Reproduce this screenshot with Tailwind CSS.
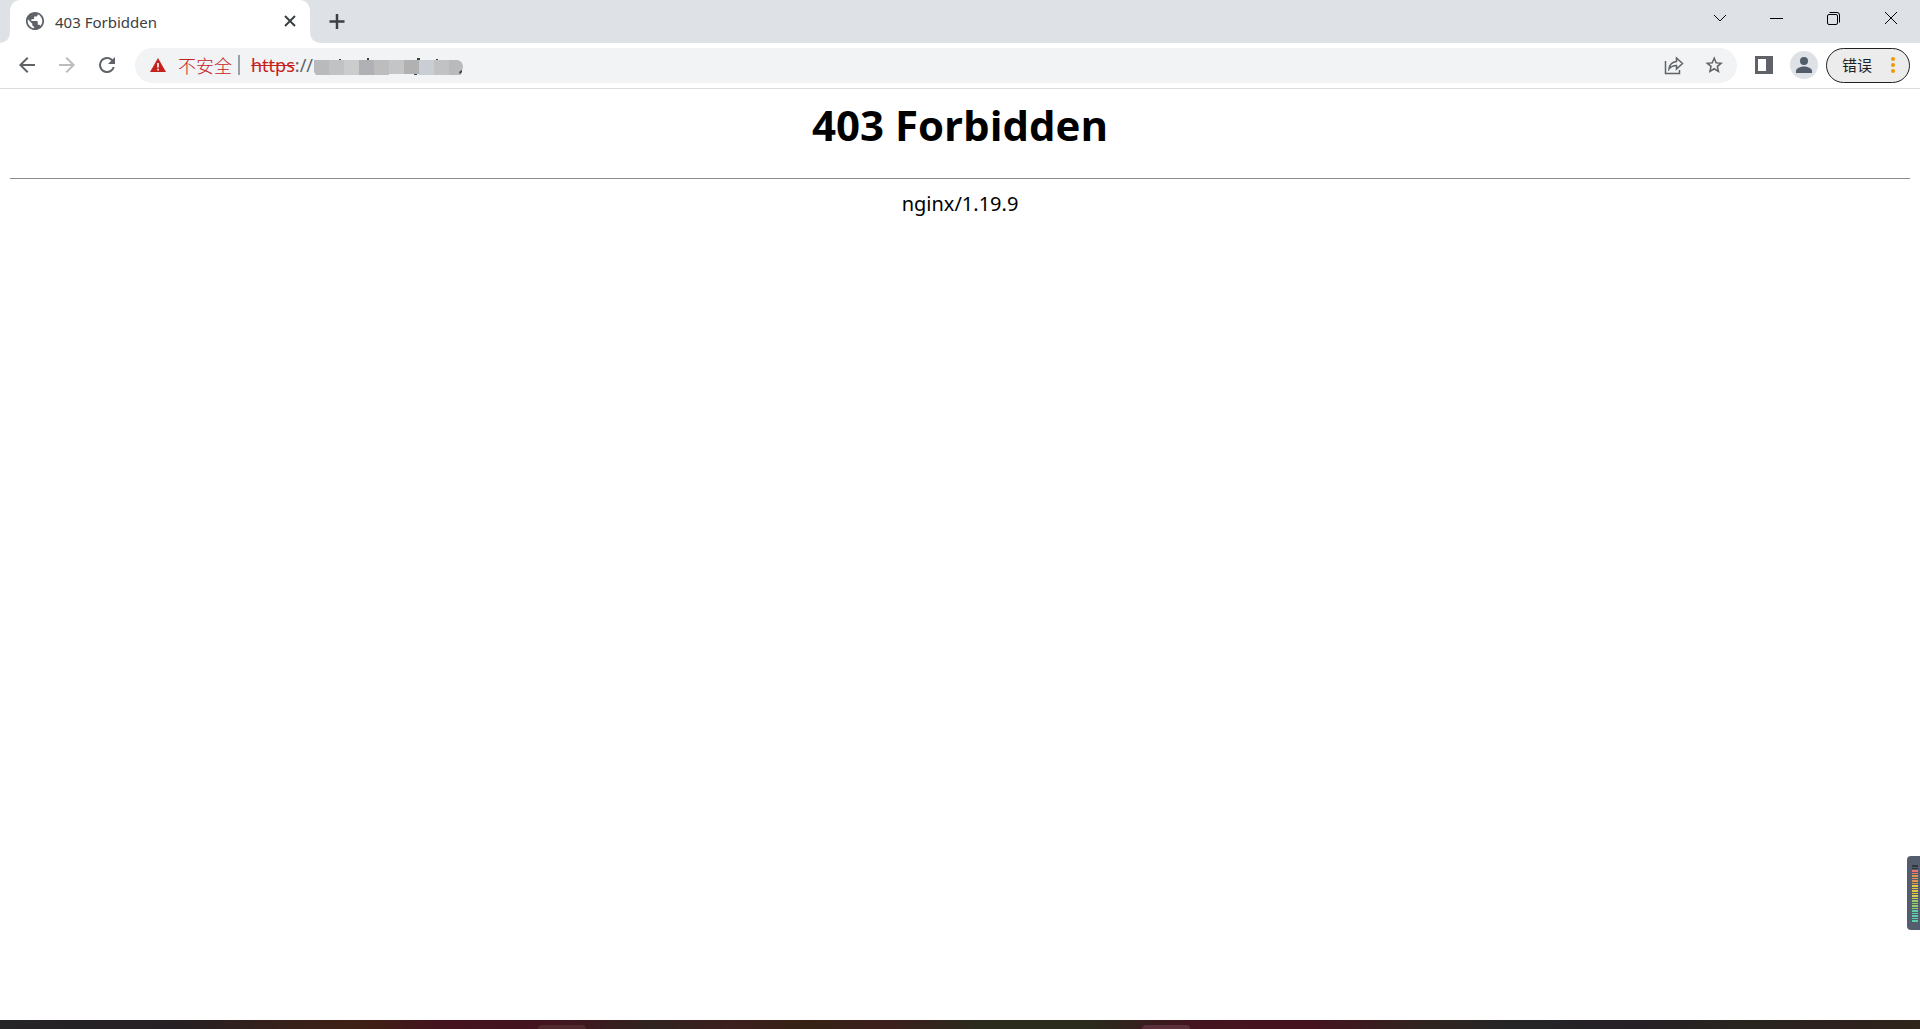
<!DOCTYPE html>
<html lang="zh-CN">
<head>
    <meta charset="UTF-8">
    <meta name="viewport" content="width=device-width, initial-scale=1.0">
    <title>403 Forbidden</title>
    <script src="https://cdn.jsdelivr.net/npm/@tailwindcss/browser@4"></script>
</head>
<body class="h-screen flex flex-col overflow-hidden bg-white font-['Noto_Sans','Noto_Sans_CJK_SC',sans-serif]">
    <!-- Tab strip -->
    <header class="h-[43px] shrink-0 flex items-stretch bg-[#dee1e6] text-[#3c4043]">
        <svg class="w-[10px] h-[43px] shrink-0" viewBox="0 0 10 43" fill="#fff" aria-hidden="true"><path d="M10 33v10H0a10 10 0 0 0 10-10z"/></svg>
        <div class="w-[300px] flex items-center bg-white rounded-t-[10px] pl-[15px] pr-[10px] pb-0.5">
            <svg class="w-5 h-5 shrink-0" viewBox="1 1 22 22" fill="#5f6368" aria-hidden="true"><path d="M12 2C6.480 2 2 6.480 2 12s4.480 10 10 10 10-4.480 10-10S17.520 2 12 2zm-1 17.930c-3.950-.490-7-3.850-7-7.930 0-.620.080-1.210.210-1.790L9 15v1c0 1.100.9 2 2 2v1.930zm6.900-2.540c-.260-.810-1-1.390-1.900-1.390h-1v-3c0-.550-.450-1-1-1H8v-2h2c.550 0 1-.450 1-1V7h2c1.100 0 2-.9 2-2v-.410c2.930 1.190 5 4.060 5 7.410 0 2.080-.8 3.970-2.100 5.390z"/></svg>
            <span class="ml-[10px] mt-0.5 flex-1 text-[15px] leading-5">403 Forbidden</span>
            <button class="w-5 h-5" aria-label="关闭标签页">
                <svg class="w-5 h-5" viewBox="0 0 20 20" stroke="#3c4043" stroke-width="2" aria-hidden="true"><path d="M5 5l10 10M15 5L5 15"/></svg>
            </button>
        </div>
        <svg class="w-[10px] h-[43px] shrink-0" viewBox="0 0 10 43" fill="#fff" aria-hidden="true"><path d="M0 33v10h10A10 10 0 0 1 0 33z"/></svg>
        <button class="w-[34px] pb-0.5 flex items-center justify-center" aria-label="打开新的标签页">
            <svg class="w-5 h-5" viewBox="0 0 20 20" stroke="#3c4043" stroke-width="2.500" aria-hidden="true"><path d="M10 3v15M2.500 10.500h15"/></svg>
        </button>
        <div class="ml-auto h-9 pr-px flex text-black">
            <button class="w-[57px] flex items-center justify-center" aria-label="搜索标签页">
                <svg class="w-4 h-4" viewBox="0 0 16 16" fill="none" stroke="currentColor" aria-hidden="true"><path d="M2 5l6 6 6-6"/></svg>
            </button>
            <button class="w-[57px] flex items-center justify-center" aria-label="最小化">
                <svg class="w-4 h-4" viewBox="0 0 16 16" stroke="currentColor" aria-hidden="true"><path d="M1 8.500h13"/></svg>
            </button>
            <button class="w-[57px] flex items-center justify-center" aria-label="还原">
                <svg class="w-4 h-4" viewBox="0 0 16 16" fill="none" stroke="currentColor" aria-hidden="true"><rect x="1.500" y="4.500" width="10" height="10" rx="1.500"/><path d="M3.500 2.500h7.500q2.500 0 2.500 2.500v7.500"/></svg>
            </button>
            <button class="w-[57px] flex items-center justify-center" aria-label="关闭">
                <svg class="w-4 h-4" viewBox="0 0 16 16" stroke="currentColor" aria-hidden="true"><path d="M2 2l12 12M14 2L2 14"/></svg>
            </button>
        </div>
    </header>

    <!-- Toolbar -->
    <nav class="h-[46px] shrink-0 flex items-center pl-[7px] pr-[10px] pb-px border-b border-[#dadce0] text-[#5f6368]">
        <button class="w-10 flex justify-center" aria-label="后退">
            <svg class="w-6 h-6" viewBox="0 0 24 24" fill="currentColor" aria-hidden="true"><path d="M20 11H7.830l5.590-5.590L12 4l-8 8 8 8 1.410-1.410L7.830 13H20v-2z"/></svg>
        </button>
        <button class="w-10 flex justify-center text-[#babcbe]" aria-label="前进">
            <svg class="w-6 h-6" viewBox="0 0 24 24" fill="currentColor" aria-hidden="true"><path d="M12 4l-1.410 1.410L16.170 11H4v2h12.170l-5.580 5.590L12 20l8-8z"/></svg>
        </button>
        <button class="w-10 flex justify-center" aria-label="重新加载">
            <svg class="w-6 h-6" viewBox="0 0 24 24" fill="currentColor" aria-hidden="true"><path d="M17.650 6.350A7.958 7.958 0 0 0 12 4a8 8 0 1 0 7.730 10h-2.080A6 6 0 1 1 12 6c1.660 0 3.140.690 4.220 1.780L13 11h7V4l-2.350 2.350z"/></svg>
        </button>
        <div class="ml-2 h-[35px] flex-1 flex items-center rounded-full bg-[#f1f3f4] pl-[15px] pr-[11px] text-[18px] leading-6 text-[#5f6368]">
            <button class="flex items-center text-[#c5221f]">
                <svg class="w-4 h-4" viewBox="0 0 16 16" aria-hidden="true"><path d="M8 1l8 14H0z" fill="#c5221f"/><path d="M7.200 6h1.600v4.500H7.200zM7.200 11.800h1.600v1.600H7.200z" fill="#fff"/></svg>
                <span class="ml-3 font-light font-['Noto_Sans_CJK_SC',sans-serif]">不安全</span>
            </button>
            <span class="ml-[6px] mr-[11px] w-0.5 h-5 bg-[#9aa0a6]"></span>
            <span><s class="text-[#c5221f]">https</s>://</span>
            <!-- Redacted host name -->
            <svg class="w-[150px] h-5" viewBox="0 0 150 20" aria-hidden="true">
                <path d="M26 4h2v2h-2zM54 3h2v3h-2zM104 3h3v3h-3zM123 4h2v2h-2zM101 19h3v1h-3zM108 19h2v1h-2z" fill="#3c4043"/>
                <path d="M1 5h15v15H3l-2-3z" fill="#b8babc"/>
                <path d="M16 5h15v15H16z" fill="#c1c2c3"/>
                <path d="M31 5h15v15H31z" fill="#cbcdcc"/>
                <path d="M46 5h15v15H46z" fill="#b0b1b5"/>
                <path d="M61 5h15v15H61z" fill="#bdbdbd"/>
                <path d="M76 5h15v14H76z" fill="#c4c5c7"/>
                <path d="M91 5h15v14H91z" fill="#b1b1b1"/>
                <path d="M106 5h15v15h-15z" fill="#c8ced3"/>
                <path d="M121 5h15v15h-15z" fill="#c1c2c4"/>
                <path d="M136 5h9q5 2 5 7l-2 8h-12z" fill="#b9babb"/>
                <path d="M146 17l3-2v2l-2 2z" fill="#3c4043"/>
            </svg>
            <div class="ml-auto flex gap-4">
                <button aria-label="分享此网页">
                    <svg class="w-6 h-6" viewBox="0 0 24 24" fill="none" stroke="currentColor" stroke-width="1.500" aria-hidden="true"><path d="M3.500 8v12.500h14V17M14.500 5l6 5.500-6 5.500v-3.500c-3.500 0-5.500 1-7.500 3.500.5-4 3-7 7.500-7.500z"/></svg>
                </button>
                <button aria-label="为此标签页添加书签">
                    <svg class="w-6 h-6" viewBox="0 0 24 24" fill="currentColor" aria-hidden="true"><path d="M21 9.700l-6.300-.55L12.200 3.300 9.700 9.150l-6.300.55 4.800 4.150L6.800 20l5.400-3.250L17.600 20l-1.400-6.150zm-8.800 5.100l-3.150 1.900.84-3.580-2.790-2.410 3.670-.32 1.430-3.390 1.430 3.390 3.670.32-2.790 2.410.84 3.580z"/></svg>
                </button>
            </div>
        </div>
        <button class="ml-[17px] w-5 h-5" aria-label="侧边栏">
            <svg class="w-5 h-5" viewBox="0 0 20 20" aria-hidden="true"><path d="M1 1h18v18H1zM4 4v12h8V4z" fill="#5f6368" fill-rule="evenodd"/></svg>
        </button>
        <button class="ml-4 w-7 h-7 flex items-center justify-center rounded-full bg-[#dee1e6]" aria-label="用户">
            <svg class="w-6 h-6" viewBox="0 0 24 24" fill="#525d6b" aria-hidden="true"><circle cx="12" cy="8" r="4"/><path d="M4 20v-2c0-3 5-4.500 8-4.500s8 1.500 8 4.500v2z"/></svg>
        </button>
        <button class="ml-2 h-[35px] w-[84px] flex items-center justify-between rounded-full border border-[#202124] bg-[#ececec] pl-[15px] pr-3 text-[15px] text-[#202124]">
            <span class="font-['Noto_Sans_CJK_SC',sans-serif]">错误</span>
            <svg class="w-2 h-5" viewBox="0 0 8 20" fill="#f29900" aria-hidden="true"><circle cx="4" cy="4" r="2"/><circle cx="4" cy="10" r="2"/><circle cx="4" cy="16" r="2"/></svg>
        </button>
    </nav>

    <!-- Page content -->
    <main class="relative flex-1 px-[10px] text-center text-black">
        <h1 class="pt-2 text-[42px] leading-[56px] font-bold font-['Open_Sans',sans-serif]">403 Forbidden</h1>
        <hr class="mt-[25px] border-0 h-px bg-[#8d8d8d]">
        <p class="mt-[11px] text-[20px] leading-7">nginx/1.19.9</p>
        <!-- Level meter docked to the screen edge -->
        <div class="absolute right-0 bottom-[90px]">
            <svg class="block w-[13px] h-[74px]" viewBox="0 0 13 74" aria-hidden="true">
                <path d="M13 0H4Q0 0 0 4v66q0 4 4 4h9z" fill="#545d6d"/>
                <path d="M5 9h6v2H5zM5 12h6v1H5z" fill="#30343d"/>
                <path d="M5 14h6v2H5zM5 17h6v1H5z" fill="#f0706a"/>
                <path d="M5 19h6v2H5zM5 22h6v1H5zM5 24h6v2H5zM5 27h6v1H5z" fill="#e0954e"/>
                <path d="M5 29h6v2H5zM5 32h6v1H5zM5 34h6v2H5zM5 37h6v1H5z" fill="#e3c63f"/>
                <path d="M5 39h6v2H5zM5 42h6v1H5z" fill="#cfd24f"/>
                <path d="M5 44h6v2H5zM5 47h6v1H5zM5 49h6v2H5zM5 52h6v1H5z" fill="#93cd70"/>
                <path d="M5 54h6v2H5zM5 57h6v1H5zM5 59h6v2H5zM5 62h6v1H5zM5 64h6v2H5z" fill="#59d0a8"/>
            </svg>
        </div>
    </main>

    <!-- Desktop edge below the window -->
    <footer class="relative h-[9px] shrink-0 bg-[linear-gradient(90deg,#252427_0%,#252023_9%,#3a2119_16%,#3f2015_19%,#44131f_23%,#43151f_29%,#2f241f_34%,#3d1f1f_38%,#352214_42%,#3c1f1d_46%,#2a2a1d_51%,#2a2a1d_57%,#43151f_62%,#46121f_68%,#30241f_74%,#252527_79%,#252026_85%,#28251f_91%,#2e211f_96%,#2f251a_100%)]">
        <span class="absolute left-[28%] bottom-0 w-12 h-1 rounded-t-sm bg-[#50292e]"></span>
        <span class="absolute left-[59.500%] bottom-0 w-12 h-1 rounded-t-sm bg-[#5b303a]"></span>
    </footer>
</body>
</html>
